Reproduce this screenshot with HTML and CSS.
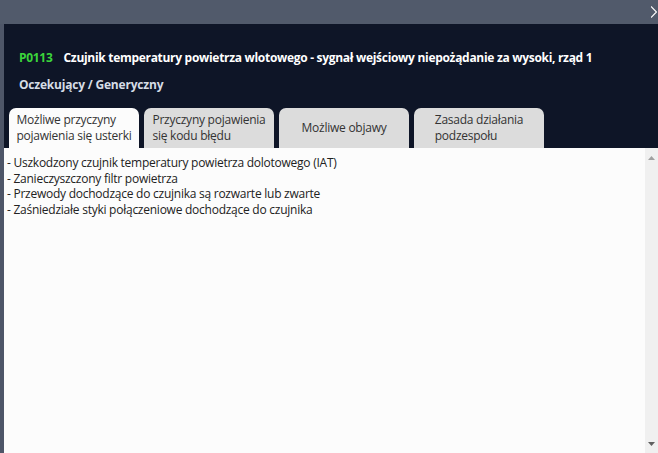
FILE: index.html
```html
<!DOCTYPE html>
<html lang="pl">
<head>
<meta charset="utf-8">
<title>P0113</title>
<link rel="stylesheet" href="styles.css">
</head>
<body>
<div class="topbar">
  <svg class="close" width="6" height="12" viewBox="0 0 6 12"><path d="M0 0.5 L5.5 6 L0 11.5" fill="none" stroke="#ffffff" stroke-width="1.2"/></svg>
</div>
<div class="panel">
  <div class="header">
    <div class="title"><span class="code">P0113</span><span class="name">Czujnik temperatury powietrza wlotowego - sygnał wejściowy niepożądanie za wysoki, rząd 1</span></div>
    <div class="subtitle">Oczekujący / Generyczny</div>
  </div>
  <div class="tabs">
    <div class="tab active"><span>Możliwe przyczyny<br>pojawienia się usterki</span></div>
    <div class="tab"><span>Przyczyny pojawienia<br>się kodu błędu</span></div>
    <div class="tab"><span>Możliwe objawy</span></div>
    <div class="tab"><span>Zasada działania<br>podzespołu</span></div>
  </div>
  <div class="content">
    <div class="text">
      <div>- Uszkodzony czujnik temperatury powietrza dolotowego (IAT)</div>
      <div>- Zanieczyszczony filtr powietrza</div>
      <div>- Przewody dochodzące do czujnika są rozwarte lub zwarte</div>
      <div>- Zaśniedziałe styki połączeniowe dochodzące do czujnika</div>
    </div>
    <div class="scrollbar">
      <svg width="7" height="4" viewBox="0 0 7 4"><path d="M0 4 L3.5 0 L7 4 Z" fill="#a0a0a0"/></svg>
      <svg width="7" height="4" viewBox="0 0 7 4"><path d="M0 0 L3.5 4 L7 0 Z" fill="#606060"/></svg>
    </div>
  </div>
</div>
</body>
</html>
```
FILE: styles.css
```css
html, body {
  margin: 0;
  padding: 0;
}
body {
  width: 658px;
  height: 453px;
  overflow: hidden;
  background: #4e5668;
  font-family: "Open Sans", "Noto Sans", sans-serif;
  display: flex;
  flex-direction: column;
}
.topbar {
  height: 24px;
  flex: 0 0 24px;
  display: flex;
  justify-content: flex-end;
  align-items: center;
  background: #515a6b;
}
.close {
  display: block;
  margin-right: 1px;
}
.panel {
  flex: 1;
  margin-left: 4px;
  background: #0e1527;
  display: flex;
  flex-direction: column;
  min-height: 0;
}
.header {
  padding: 25px 0 0 15px;
}
.title {
  font-size: 12px;
  font-weight: 700;
  line-height: 17px;
  letter-spacing: -0.3px;
  color: #ffffff;
  white-space: nowrap;
}
.code {
  color: #3bd43b;
  margin-right: 11px;
}
.subtitle {
  margin-top: 10px;
  font-size: 12px;
  font-weight: 700;
  line-height: 17px;
  letter-spacing: -0.2px;
  color: #d6dde6;
}
.tabs {
  display: flex;
  gap: 5px;
  padding-left: 5px;
  margin-top: 15px;
}
.tab {
  width: 130px;
  height: 40px;
  border-radius: 7px 7px 0 0;
  background: #dcdcdc;
  display: flex;
  align-items: center;
  justify-content: center;
  font-size: 12px;
  line-height: 16px;
  letter-spacing: -0.25px;
  color: #333333;
}
.tab.active {
  background: #fcfcfc;
}
.tab span {
  display: inline-block;
  text-align: left;
}
.content {
  flex: 1;
  background: #fcfcfc;
  display: flex;
  min-height: 0;
}
.text {
  flex: 1;
  padding: 7px 0 0 3px;
  font-size: 12px;
  line-height: 15.5px;
  letter-spacing: -0.25px;
  color: #222222;
}
.scrollbar {
  width: 13px;
  background: #f0f0f0;
  display: flex;
  flex-direction: column;
  justify-content: space-between;
  align-items: center;
  padding: 8px 0 7px;
}
.scrollbar svg {
  display: block;
}
```
